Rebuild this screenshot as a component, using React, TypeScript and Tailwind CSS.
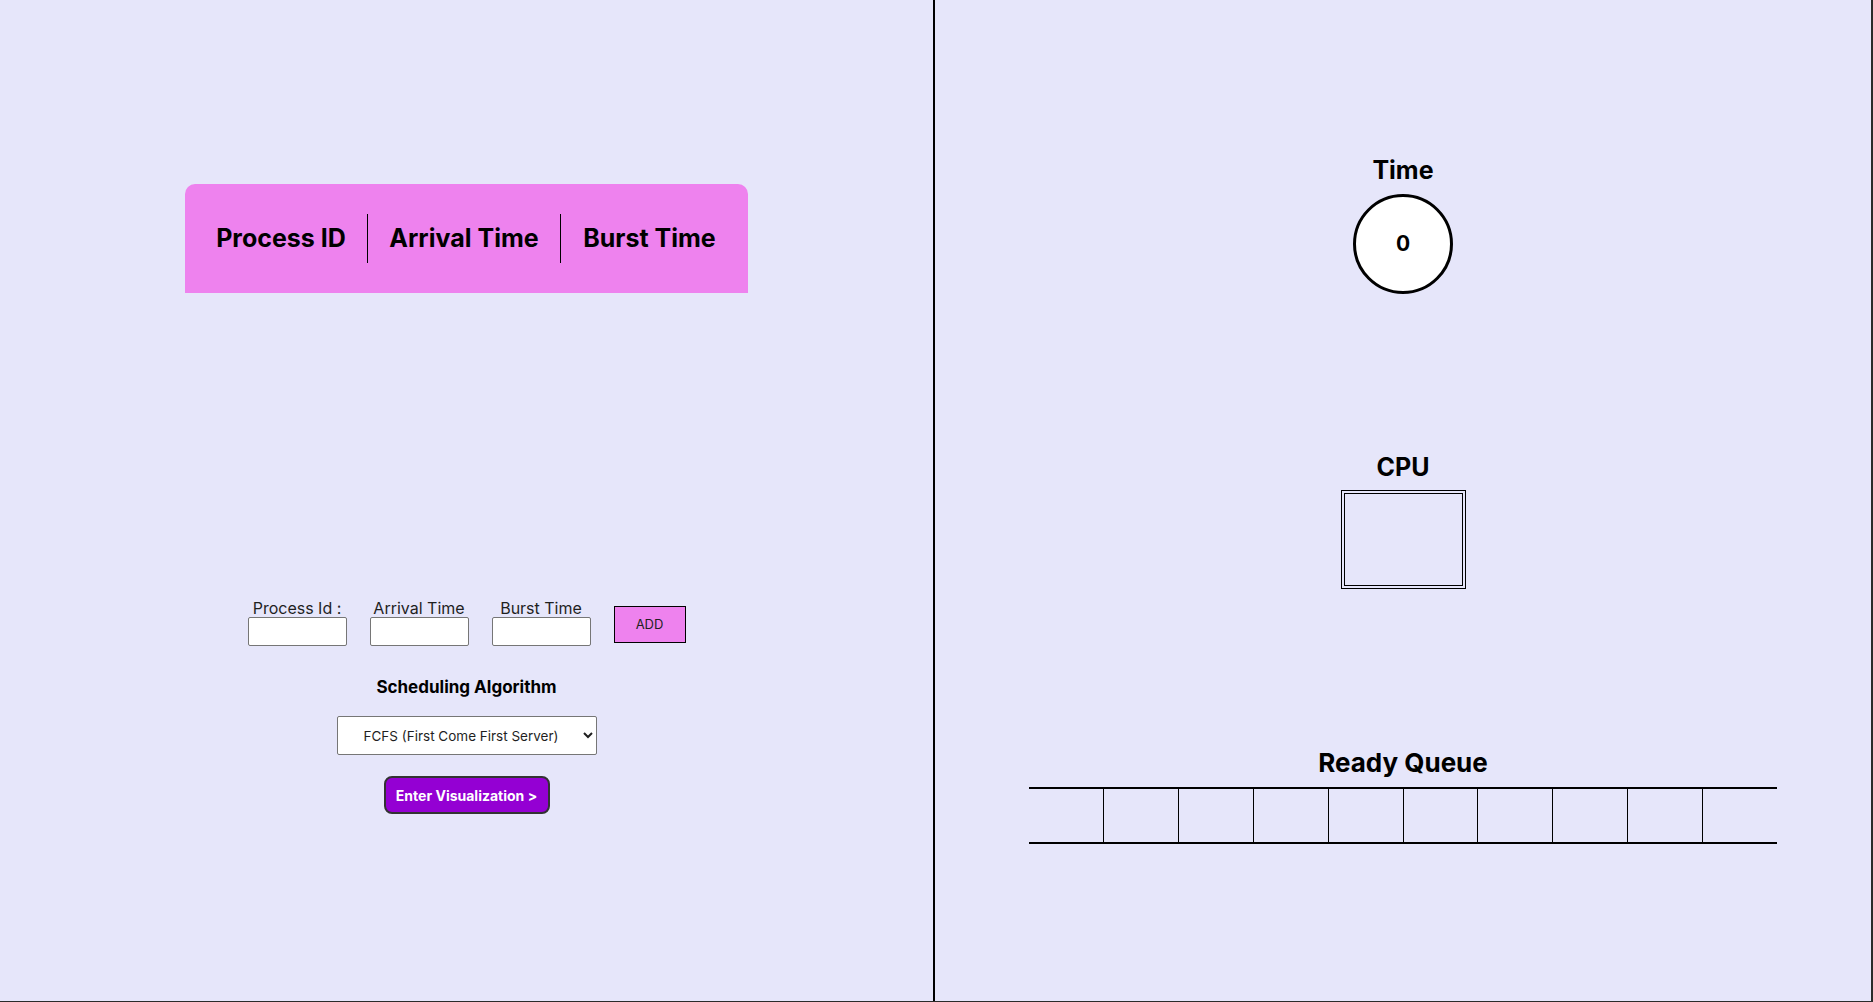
import React from "react";

const font = { fontFamily: "Inter, 'Open Sans', sans-serif" };

function Field({ label }: { label: string }) {
  return (
    <div className="flex flex-col items-center w-[99px]">
      <span className="text-[16px] leading-[16px] text-[#1f1f1f] whitespace-nowrap">{label}</span>
      <input className="mt-[1px] w-[99px] h-[29px] bg-white border border-[#767676] rounded-[2px]" />
    </div>
  );
}

export default function App() {
  const cells = Array.from({ length: 10 }, (_, i) => i);
  return (
    <div
      className="w-[1873px] h-[1002px] flex bg-[#e6e6fa] border-b border-r-2 border-[#2b2b2b] text-black overflow-hidden"
      style={font}
    >
      {/* Left half */}
      <div className="w-[935px] h-full border-r-2 border-black flex flex-col items-center pt-[184px]">
        <div className="w-[563px] h-[109px] bg-[#ee82ee] rounded-t-[10px] px-[10px] flex items-center">
          <div className="w-[173px] h-[49px] border-r border-black flex items-center justify-center">
            <span className="text-[25px] font-bold whitespace-nowrap">Process ID</span>
          </div>
          <div className="w-[193px] h-[49px] border-r border-black flex items-center justify-center">
            <span className="text-[25px] font-bold whitespace-nowrap">Arrival Time</span>
          </div>
          <div className="w-[177px] h-[49px] flex items-center justify-center">
            <span className="text-[25px] font-bold whitespace-nowrap">Burst Time</span>
          </div>
        </div>

        <div className="mt-[307px] flex flex-col items-center">
          <div className="flex items-end gap-[23px]">
            <Field label="Process Id :" />
            <Field label="Arrival Time" />
            <Field label="Burst Time" />
            <button className="mb-[3px] w-[72px] h-[37px] bg-[#ee82ee] border border-black text-[13px] text-[#222]">
              ADD
            </button>
          </div>
          <div className="mt-[33px] text-[17px] leading-[17px] font-bold">Scheduling Algorithm</div>
          <select className="mt-[20px] w-[260px] h-[39px] bg-white border border-[#767676] rounded-[2px] pl-[22px] pr-[6px] text-[13.5px] text-[#1f1f1f]">
            <option>FCFS (First Come First Server)</option>
          </select>
          <button className="mt-[21px] w-[166px] h-[38px] bg-[#9400d3] border-2 border-[#333] rounded-[8px] text-white font-bold text-[14px]">
            Enter Visualization &gt;
          </button>
        </div>
      </div>

      {/* Right half */}
      <div className="flex-1 h-full flex flex-col items-center pt-[158px]">
        <div className="text-[25px] leading-[24px] font-bold">Time</div>
        <div className="mt-[12px] w-[100px] h-[100px] rounded-full bg-white border-[3px] border-black flex items-center justify-center">
          <span className="text-[21px] font-bold">0</span>
        </div>
        <div className="mt-[161px] text-[25px] leading-[24px] font-bold">CPU</div>
        <div className="mt-[11px] w-[125px] h-[99px] border-[4px] border-double border-black" />
        <div className="mt-[161px] text-[26px] leading-[25px] font-bold">Ready Queue</div>
        <div className="mt-[12px] w-[748px] h-[57px] border-y-2 border-black flex">
          {cells.map((i) => (
            <div key={i} className={i < 9 ? "flex-1 h-full border-r border-black" : "flex-1 h-full"} />
          ))}
        </div>
      </div>
    </div>
  );
}
